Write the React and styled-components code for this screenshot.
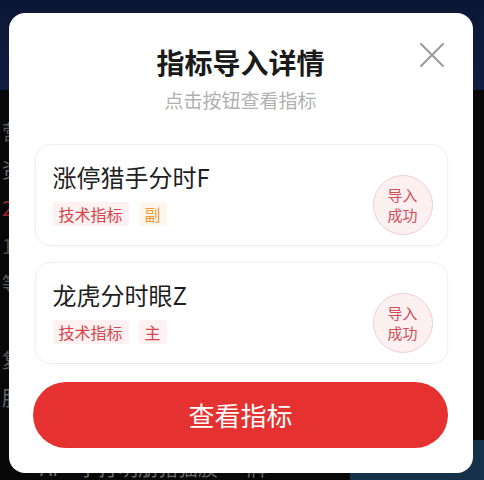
import React from "react";
import styled, { createGlobalStyle } from "styled-components";

const GlobalStyle = createGlobalStyle`
  html, body {
    margin: 0;
    padding: 0;
    background: #080808;
  }
  body {
    font-family: "Noto Sans CJK SC", "Noto Sans", sans-serif;
  }
`;

const indicators = [
  { name: "涨停猎手分时F", kind: "技术指标", pane: "副", tone: "orange" },
  { name: "龙虎分时眼Z", kind: "技术指标", pane: "主", tone: "red" },
];

const sideText = [
  { t: "营", c: "#5a5a5a" },
  { t: "资", c: "#6a6a6a" },
  { t: "2", c: "#a0262a" },
  { t: "1", c: "#4a4a4a" },
  { t: "等", c: "#5a5a5a" },
  { t: "·", c: "#b02a2a" },
  { t: "复", c: "#5a5a5a" },
  { t: "股", c: "#6a6a6a" },
];

export default function App() {
  return (
    <>
      <GlobalStyle />
      <Screen>
        <HeaderBand />
        <Body>
          <SideColumn>
            {sideText.map((s, i) => (
              <SideGlyph key={i} color={s.c}>{s.t}</SideGlyph>
            ))}
          </SideColumn>
          <BottomStrip>
            <BottomText>AI一字打明朋猪猫膜 一 牌</BottomText>
            <BluePatch />
          </BottomStrip>
        </Body>

        <Modal>
          <CloseButton aria-label="close">
            <svg width="26" height="26" viewBox="0 0 26 26">
              <path d="M2 2 L24 24 M24 2 L2 24" stroke="#9a9a9a" strokeWidth="2" strokeLinecap="round" />
            </svg>
          </CloseButton>
          <Title>指标导入详情</Title>
          <Subtitle>点击按钮查看指标</Subtitle>

          <List>
            {indicators.map((item) => (
              <Card key={item.name}>
                <CardMain>
                  <CardTitle>{item.name}</CardTitle>
                  <Tags>
                    <Tag tone="red">{item.kind}</Tag>
                    <Tag tone={item.tone}>{item.pane}</Tag>
                  </Tags>
                </CardMain>
                <Stamp>
                  <StampLine>导入</StampLine>
                  <StampLine>成功</StampLine>
                </Stamp>
              </Card>
            ))}
          </List>

          <PrimaryButton>查看指标</PrimaryButton>
        </Modal>
      </Screen>
    </>
  );
}

const Screen = styled.div`
  position: relative;
  width: 484px;
  height: 480px;
  overflow: hidden;
  display: flex;
  flex-direction: column;
  background: #080808;
`;

const HeaderBand = styled.div`
  height: 90px;
  background: linear-gradient(180deg, #0c1735 0%, #101d42 100%);
`;

const Body = styled.div`
  flex: 1;
  display: flex;
  flex-direction: column;
  justify-content: space-between;
`;

const SideColumn = styled.div`
  display: flex;
  flex-direction: column;
  gap: 14px;
  padding-top: 30px;
  padding-left: 2px;
  width: 30px;
`;

const SideGlyph = styled.span`
  font-size: 20px;
  line-height: 24px;
  color: ${(p) => p.color};
`;

const BottomStrip = styled.div`
  display: flex;
  align-items: flex-end;
  justify-content: space-between;
  height: 40px;
`;

const BottomText = styled.span`
  font-size: 20px;
  line-height: 24px;
  color: #6a6a6a;
  margin-left: 40px;
  margin-bottom: 0;
`;

const BluePatch = styled.div`
  width: 134px;
  height: 40px;
  background: #16304a;
`;

const Modal = styled.div`
  position: absolute;
  left: 9px;
  top: 13px;
  width: 464px;
  height: 460px;
  box-sizing: border-box;
  background: #ffffff;
  border-radius: 16px;
  padding: 30px 25px 25px 24px;
  display: flex;
  flex-direction: column;
  align-items: center;
`;

const CloseButton = styled.button`
  position: absolute;
  top: 29px;
  right: 28px;
  width: 26px;
  height: 26px;
  padding: 0;
  border: 0;
  background: none;
  display: flex;
`;

const Title = styled.div`
  font-size: 28px;
  line-height: 38px;
  font-weight: 700;
  color: #1a1a1a;
`;

const Subtitle = styled.div`
  margin-top: 7px;
  font-size: 19px;
  line-height: 24px;
  color: #b0b0b0;
`;

const List = styled.div`
  margin-top: 32px;
  width: 413px;
  margin-left: 1px;
  display: flex;
  flex-direction: column;
  gap: 16px;
`;

const Card = styled.div`
  height: 102px;
  box-sizing: border-box;
  border: 1px solid #f0f0f0;
  border-radius: 16px;
  box-shadow: 0 1px 4px rgba(0, 0, 0, 0.03);
  padding: 15px 14px 18px 17px;
  display: flex;
  align-items: center;
  justify-content: space-between;
`;

const CardMain = styled.div`
  display: flex;
  flex-direction: column;
  gap: 9px;
`;

const CardTitle = styled.div`
  font-size: 24px;
  line-height: 32px;
  color: #1e1e1e;
`;

const Tags = styled.div`
  display: flex;
  gap: 10px;
`;

const Tag = styled.span`
  font-size: 16px;
  line-height: 24px;
  padding: 0 6px;
  border-radius: 3px;
  color: ${(p) => (p.tone === "orange" ? "#ee9a2e" : "#d9444c")};
  background: ${(p) => (p.tone === "orange" ? "#fdf6ee" : "#fdf1f1")};
`;

const Stamp = styled.div`
  width: 60px;
  height: 60px;
  box-sizing: border-box;
  margin-top: 22px;
  border-radius: 50%;
  border: 1px solid #f1cdd1;
  background: #fdf0f1;
  color: #d24e58;
  display: flex;
  flex-direction: column;
  align-items: center;
  justify-content: center;
`;

const StampLine = styled.span`
  font-size: 15px;
  line-height: 20px;
`;

const PrimaryButton = styled.button`
  margin-top: auto;
  width: 415px;
  height: 66px;
  border: 0;
  border-radius: 33px;
  background: #e53130;
  color: #ffffff;
  font-family: "Noto Sans CJK SC", sans-serif;
  font-size: 26px;
  padding-bottom: 3px;
`;
